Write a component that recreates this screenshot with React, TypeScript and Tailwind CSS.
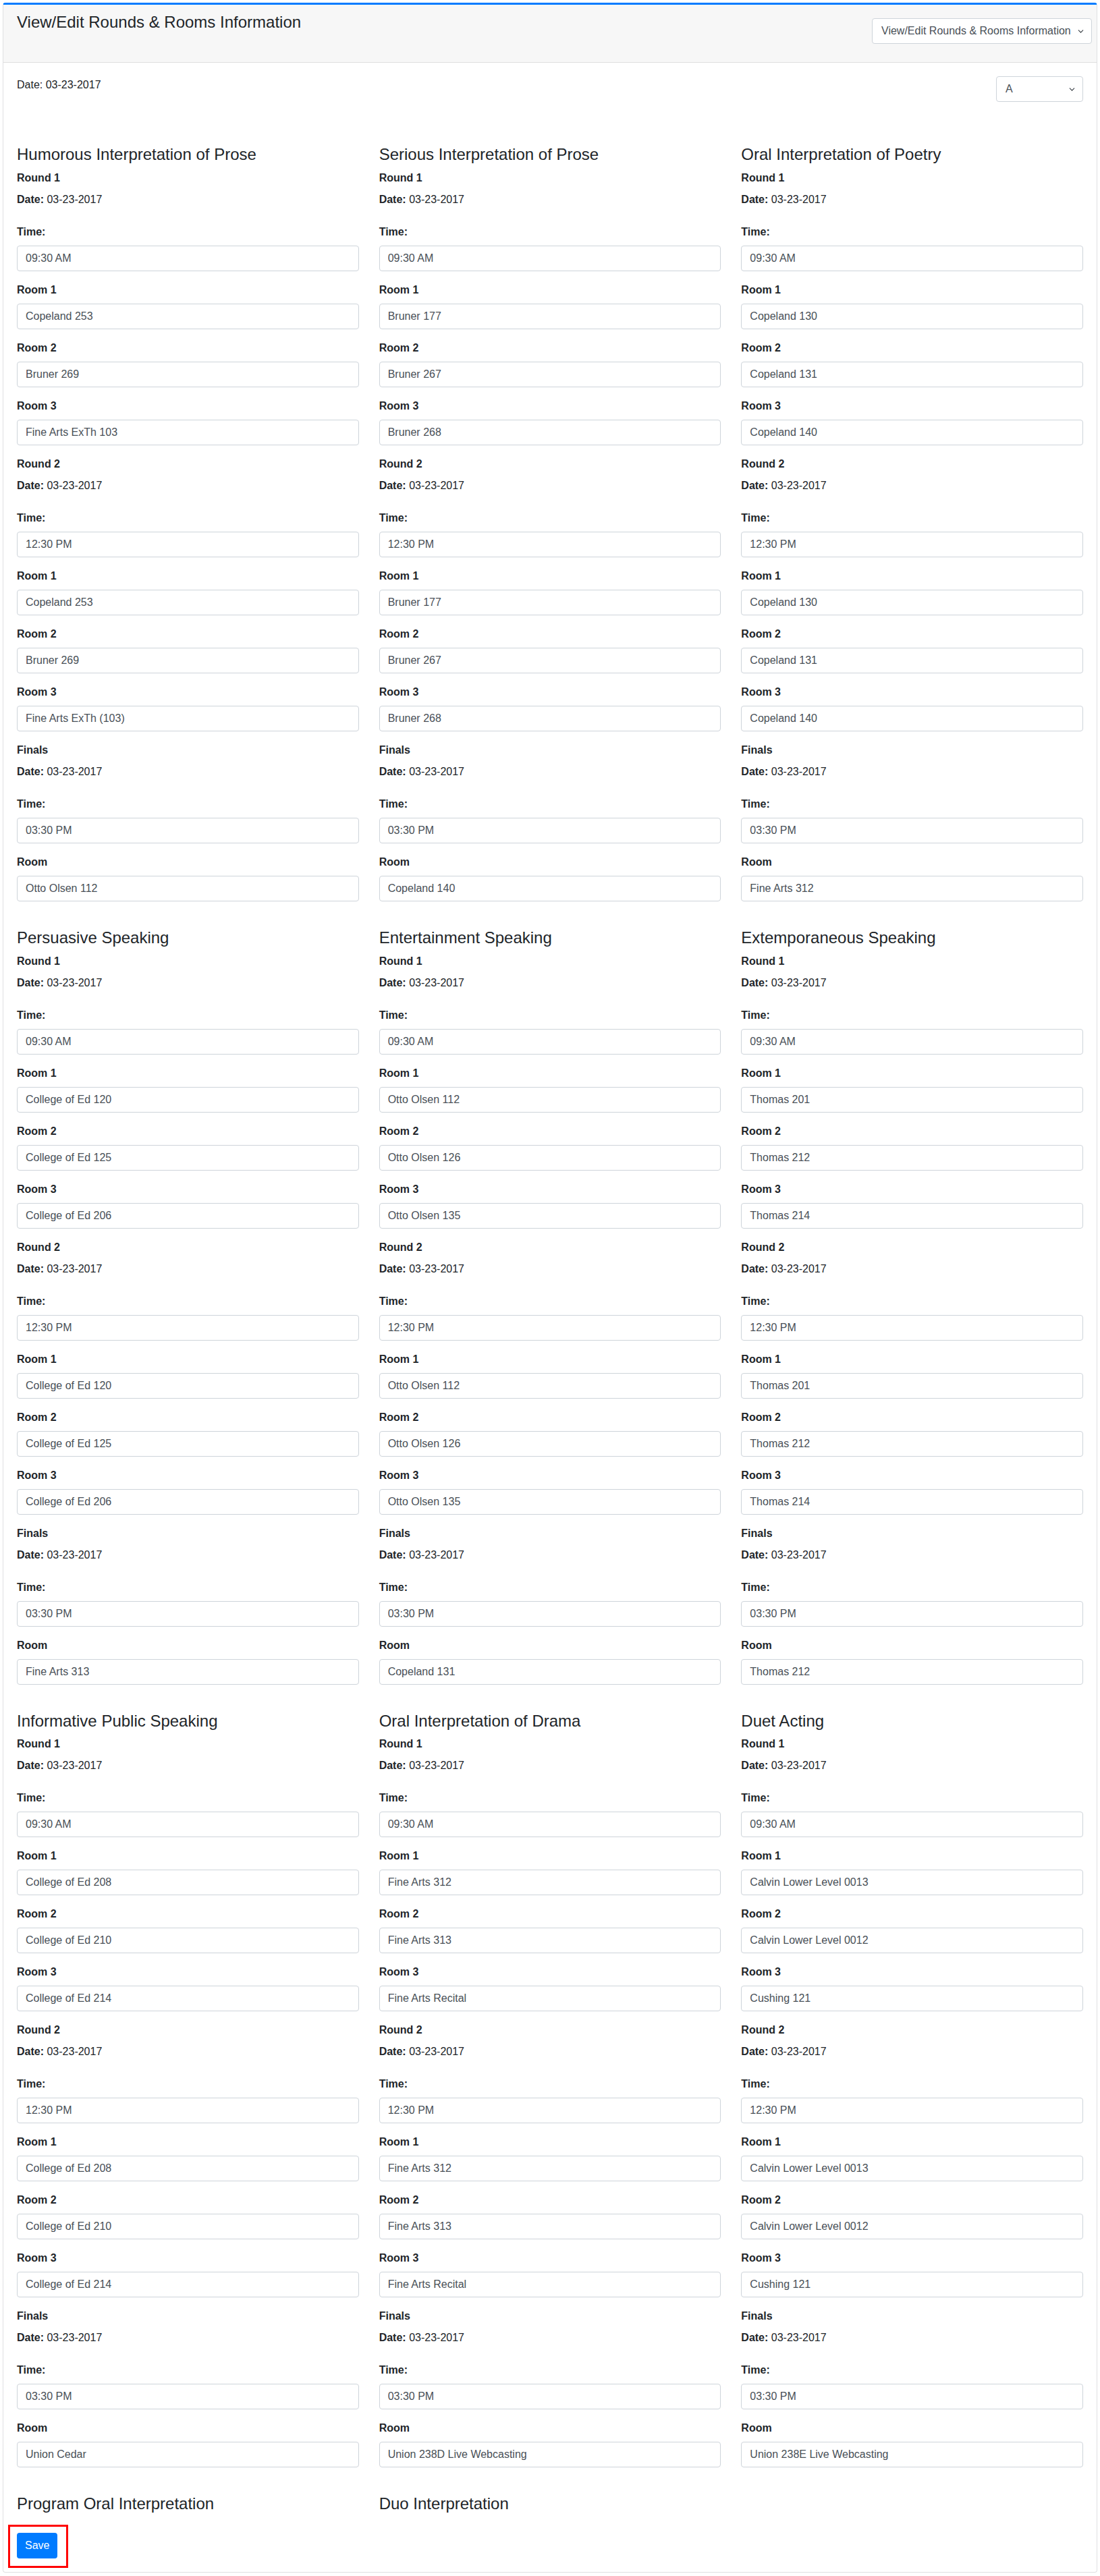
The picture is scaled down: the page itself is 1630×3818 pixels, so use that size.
import { ChevronDown } from 'lucide-react';

type Round = { title: string; time: string; rooms: string[] };
type Event = { name: string; rounds: Round[] };

const DATE = '03-23-2017';

function ev(name: string, r1: string[], r2: string[], fin?: string): Event {
  if (!r1.length) return { name, rounds: [] };
  return {
    name,
    rounds: [
      { title: 'Round 1', time: '09:30 AM', rooms: r1 },
      { title: 'Round 2', time: '12:30 PM', rooms: r2 },
      { title: 'Finals', time: '03:30 PM', rooms: fin ? [fin] : [] },
    ],
  };
}

const events: Event[] = [
  ev(
    'Humorous Interpretation of Prose',
    ['Copeland 253', 'Bruner 269', 'Fine Arts ExTh 103'],
    ['Copeland 253', 'Bruner 269', 'Fine Arts ExTh (103)'],
    'Otto Olsen 112',
  ),
  ev(
    'Serious Interpretation of Prose',
    ['Bruner 177', 'Bruner 267', 'Bruner 268'],
    ['Bruner 177', 'Bruner 267', 'Bruner 268'],
    'Copeland 140',
  ),
  ev(
    'Oral Interpretation of Poetry',
    ['Copeland 130', 'Copeland 131', 'Copeland 140'],
    ['Copeland 130', 'Copeland 131', 'Copeland 140'],
    'Fine Arts 312',
  ),
  ev(
    'Persuasive Speaking',
    ['College of Ed 120', 'College of Ed 125', 'College of Ed 206'],
    ['College of Ed 120', 'College of Ed 125', 'College of Ed 206'],
    'Fine Arts 313',
  ),
  ev(
    'Entertainment Speaking',
    ['Otto Olsen 112', 'Otto Olsen 126', 'Otto Olsen 135'],
    ['Otto Olsen 112', 'Otto Olsen 126', 'Otto Olsen 135'],
    'Copeland 131',
  ),
  ev(
    'Extemporaneous Speaking',
    ['Thomas 201', 'Thomas 212', 'Thomas 214'],
    ['Thomas 201', 'Thomas 212', 'Thomas 214'],
    'Thomas 212',
  ),
  ev(
    'Informative Public Speaking',
    ['College of Ed 208', 'College of Ed 210', 'College of Ed 214'],
    ['College of Ed 208', 'College of Ed 210', 'College of Ed 214'],
    'Union Cedar',
  ),
  ev(
    'Oral Interpretation of Drama',
    ['Fine Arts 312', 'Fine Arts 313', 'Fine Arts Recital'],
    ['Fine Arts 312', 'Fine Arts 313', 'Fine Arts Recital'],
    'Union 238D Live Webcasting',
  ),
  ev(
    'Duet Acting',
    ['Calvin Lower Level 0013', 'Calvin Lower Level 0012', 'Cushing 121'],
    ['Calvin Lower Level 0013', 'Calvin Lower Level 0012', 'Cushing 121'],
    'Union 238E Live Webcasting',
  ),
  ev('Program Oral Interpretation', [], []),
  ev('Duo Interpretation', [], []),
];

function Field({ label, value, last }: { label: string; value: string; last?: boolean }) {
  return (
    <div className={last ? 'mb-10' : 'mb-4'}>
      <label className="block font-bold leading-6 mb-2">{label}</label>
      <input
        readOnly
        defaultValue={value}
        className="block w-full h-[38px] px-3 border border-[#ced4da] rounded-[4px] bg-white text-[#495057] text-base outline-none"
      />
    </div>
  );
}

function Select({ value, className }: { value: string; className: string }) {
  return (
    <div
      className={`flex items-center justify-between h-[38px] pl-[13px] pr-[9px] border border-[#ced4da] rounded-[4px] bg-white text-[#495057] whitespace-nowrap ${className}`}
    >
      <span>{value}</span>
      <ChevronDown size={13} strokeWidth={2} className="shrink-0 text-[#343a40]" />
    </div>
  );
}

function EventColumn({ event }: { event: Event }) {
  return (
    <div>
      <h4 className="text-2xl leading-[1.2] font-medium mb-2">{event.name}</h4>
      {event.rounds.map((round, ri) => {
        const isFinal = round.title === 'Finals';
        return (
          <div key={round.title}>
            <div className="font-bold leading-6 mb-2">{round.title}</div>
            <p className="leading-6 mb-6">
              <b>Date:</b> {DATE}
            </p>
            <Field label="Time:" value={round.time} />
            {round.rooms.map((room, i) => (
              <Field
                key={i}
                label={isFinal ? 'Room' : `Room ${i + 1}`}
                value={room}
                last={ri === event.rounds.length - 1 && i === round.rooms.length - 1}
              />
            ))}
          </div>
        );
      })}
    </div>
  );
}

export default function App() {
  return (
    <div className="min-h-screen bg-white p-1 text-base text-[#212529] font-['Liberation_Sans',Arial,sans-serif]">
      <div className="border border-[#dfe0e2] border-t-[3px] border-t-[#007bff] rounded-[4px] bg-white">
        <div className="flex items-start justify-between h-[86px] pl-5 pr-[7px] pt-3 bg-[#f7f7f7] border-b border-[#dfdfdf]">
          <h4 className="text-2xl leading-[1.2] font-medium">View/Edit Rounds &amp; Rooms Information</h4>
          <Select value="View/Edit Rounds & Rooms Information" className="mt-2 w-[326px]" />
        </div>

        <div className="p-5">
          <div className="flex items-start justify-between">
            <div className="leading-6 mt-px">Date: {DATE}</div>
            <Select value="A" className="w-[129px]" />
          </div>

          <div className="grid grid-cols-3 gap-x-[30px] mt-16">
            {events.map((e) => (
              <EventColumn key={e.name} event={e} />
            ))}
          </div>

          <div className="relative inline-block mt-5">
            <button className="h-[38px] px-3 rounded-[4px] bg-[#007bff] text-white leading-6">Save</button>
            <div className="absolute -left-[13px] -top-[12px] -right-[16px] -bottom-[14px] border-[3px] border-[#ff0000] pointer-events-none" />
          </div>
        </div>
      </div>
    </div>
  );
}
